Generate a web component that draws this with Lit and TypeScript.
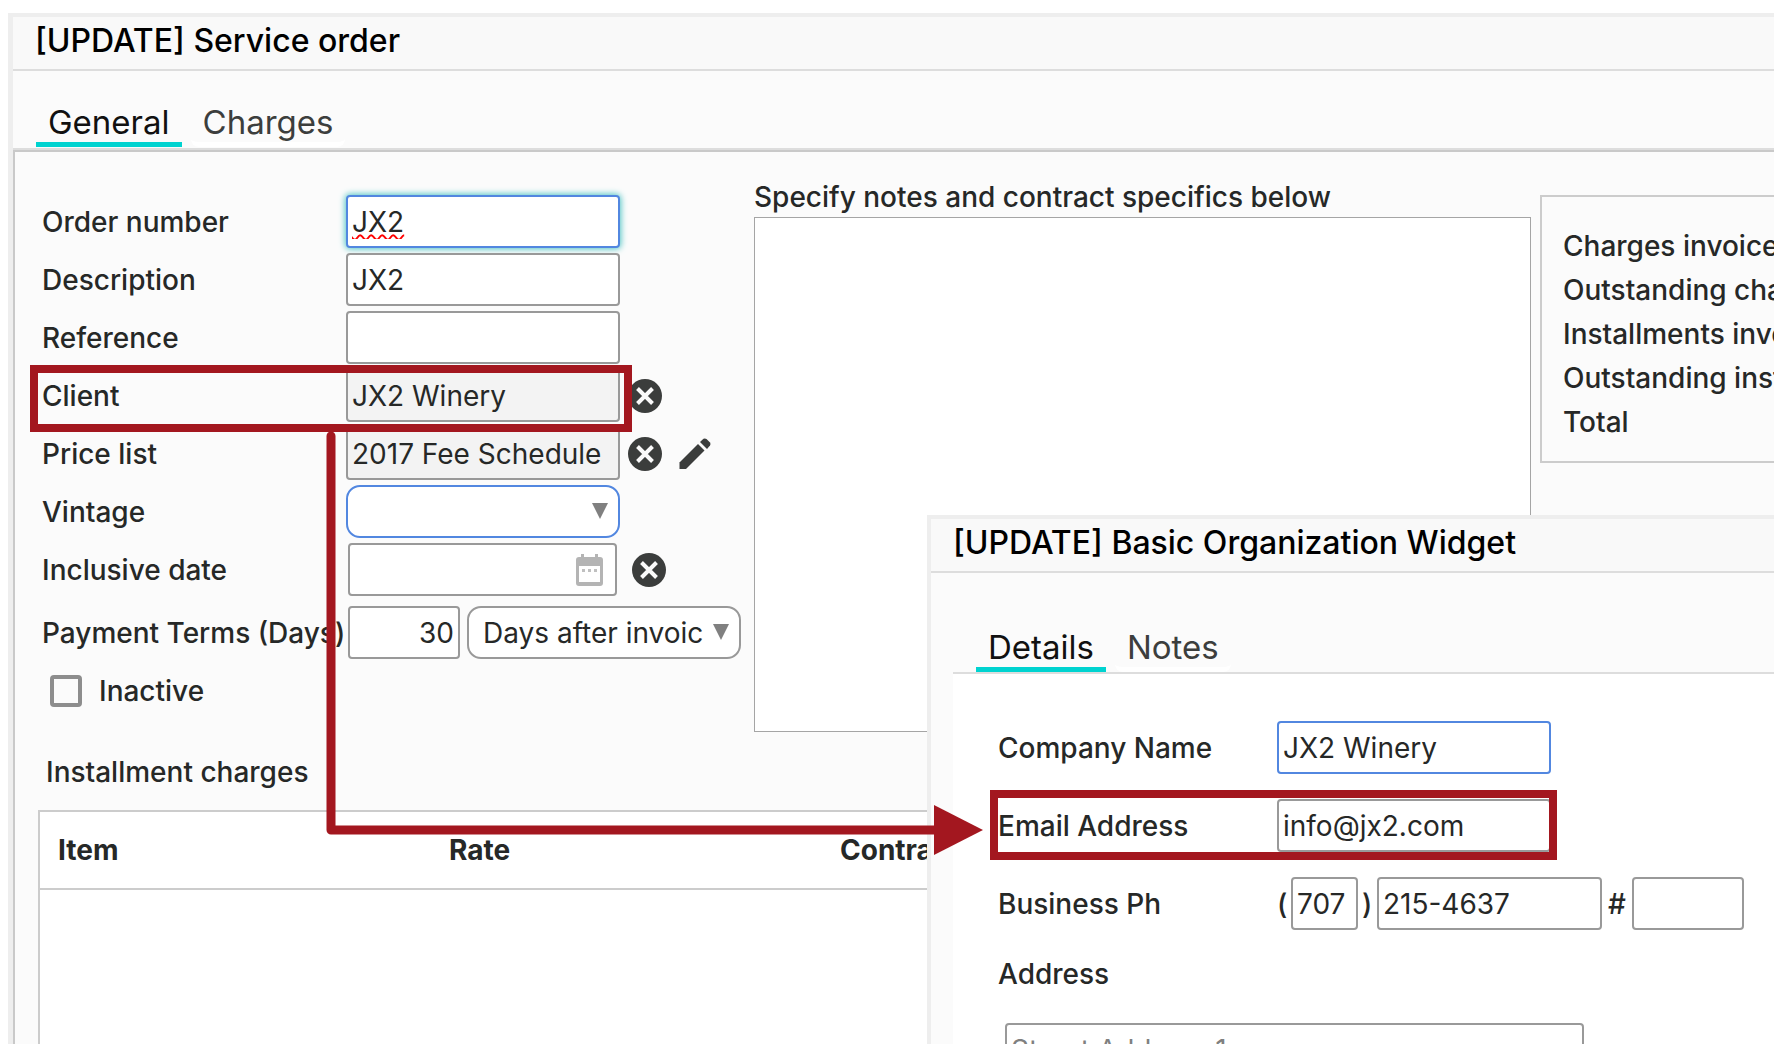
import { LitElement, html, css, svg } from "lit";
import { customElement } from "lit/decorators.js";

const clearIcon = html`<svg width="36" height="36" viewBox="0 0 36 36" aria-hidden="true">
  <circle cx="18" cy="18" r="17" fill="#3b3d3c" />
  <path d="M10.5 10.5l15 15M25.5 10.5l-15 15" stroke="#fafafa" stroke-width="4" />
</svg>`;

const pencilIcon = html`<svg width="32" height="32" viewBox="0 0 32 32" aria-hidden="true">
  <path d="M0.500 31V24.500L19 6L25.500 12.500L7 31Z" fill="#3b3d3c" />
  <path d="M21 4L24.500 0.800Q26 0 27.500 1L31 4.500Q32 6 31 7.500L28 11Z" fill="#3b3d3c" />
</svg>`;

const calendarIcon = html`<svg class="calendar" width="28" height="32" viewBox="0 0 28 32" aria-hidden="true">
  <path d="M5 0h3v5H5zM19 0h3v5h-3z" fill="#b4b4b4" />
  <path fill-rule="evenodd" d="M3 3h21q3 0 3 3v23q0 3-3 3H3q-3 0-3-3V6q0-3 3-3zM3 12v16h21V12z" fill="#b4b4b4" />
  <path d="M6 15h3v3H6zM12 15h3v3h-3zM18 15h3v3h-3z" fill="#c0c0c0" />
</svg>`;

const arrow = svg`
  <path d="M331 436V830H940" fill="none" stroke="#a3171f" stroke-width="9" stroke-linecap="round" stroke-linejoin="round" />
  <path d="M934 805L983 830L934 855Z" fill="#a3171f" />
`;

@customElement("app-root")
export class AppRoot extends LitElement {
  static styles = css`
    :host {
      display: block;
      position: relative;
      height: 100vh;
      overflow: hidden;
      background: #fff;
      color: #262827;
      font-family: Inter, "Open Sans", sans-serif;
      font-size: 28px;
      font-weight: 500;
      line-height: 32px;
    }
    * {
      box-sizing: border-box;
    }
    .window {
      display: flex;
      flex-direction: column;
      background: #fbfbfb;
      border-top: 4px solid #eee;
    }
    .order {
      height: 100%;
      border-left: 5px solid #eee;
    }
    .desk {
      height: 100%;
      padding: 13px 0 0 8px;
    }
    .org {
      position: absolute;
      left: 927px;
      right: 0;
      top: 515px;
      bottom: 0;
      border-left: 4px solid #eee;
    }
    .title {
      margin: 0;
      padding: 7px 22px;
      height: 54px;
      border-bottom: 2px solid #ddd;
      background: #f9f9f9;
      color: #000;
      font-size: 32px;
      font-weight: 500;
      line-height: 34px;
    }
    .tabs {
      display: flex;
      gap: 9px;
      border-bottom: 2px solid #ddd;
    }
    .order .tabs {
      padding: 32px 23px 1px;
    }
    .org .tabs {
      margin-left: 22px;
      padding: 55px 23px 0;
    }
    .tab {
      padding: 0 12px 1px;
      border: 0;
      border-bottom: 5px solid #fff;
      border-radius: 0 0 8px 8px;
      background: none;
      color: #3c3e3d;
      font: inherit;
      font-size: 33px;
      font-weight: 400;
      line-height: 38px;
    }
    .tab.active {
      border-color: #00d3d0;
      border-radius: 0;
      color: #111;
    }
    .panel {
      flex: 1;
      min-height: 0;
      display: flex;
      flex-direction: column;
      padding: 29px 0 0 23px;
      border: solid #c9c9c9;
      border-width: 2px 0 0 2px;
    }
    .top {
      display: grid;
      grid-template-columns: 716px minmax(0, 1fr) 234px;
    }
    .form {
      display: flex;
      flex-direction: column;
      gap: 5px;
      padding: 14px 0 0 4px;
    }
    .row {
      display: flex;
      align-items: center;
      height: 53px;
      white-space: nowrap;
    }
    .row > .name {
      flex: none;
      width: 304px;
    }
    .org .row > .name {
      width: 279px;
    }
    .field {
      width: 274px;
      height: 53px;
      padding: 0 4px;
      border: 2px solid #999;
      border-radius: 4px;
      outline: 0;
      background: #fff;
      color: #262827;
      font: inherit;
      font-weight: 400;
    }
    .field::placeholder {
      color: #808080;
    }
    .field.locked {
      background: #f3f3f3;
    }
    .field.current {
      border-color: #5287e0;
    }
    .field.focused {
      box-shadow: 0 0 6px 1px #4fc4c4;
      text-decoration: underline wavy #f00 2px;
      text-underline-offset: 2px;
    }
    .field.amount {
      width: 112px;
      text-align: right;
    }
    .field.area {
      width: 67px;
    }
    .field.phone {
      width: 225px;
    }
    .field.extension {
      width: 112px;
    }
    .field.street {
      width: 579px;
    }
    .picker {
      position: relative;
      width: 274px;
    }
    .picker .field {
      appearance: none;
      display: block;
      width: 100%;
      padding: 0 36px 0 14px;
      border-radius: 14px;
    }
    .picker::after {
      content: "";
      position: absolute;
      right: 12px;
      top: 18px;
      border: solid transparent;
      border-width: 16px 8px 0;
      border-top-color: #808080;
      pointer-events: none;
    }
    .date {
      display: flex;
      align-items: center;
      justify-content: flex-end;
      width: 269px;
      margin: 0 7px 0 2px;
    }
    .date .field {
      width: 100%;
    }
    .calendar {
      position: absolute;
      margin-right: 13px;
      pointer-events: none;
    }
    .terms {
      margin-top: 5px;
    }
    .terms .amount {
      margin: 0 7px 0 2px;
    }
    .icon {
      display: flex;
      flex: none;
      margin-left: 7px;
      padding: 0;
      border: 0;
      background: none;
    }
    .icon + .icon {
      margin-left: 16px;
    }
    .inactive {
      gap: 17px;
      padding-left: 8px;
    }
    .tick {
      appearance: none;
      width: 32px;
      height: 32px;
      margin: 0;
      border: 4px solid #8d8d8d;
      border-radius: 4px;
      background: #fbfbfb;
    }
    .notes {
      display: flex;
      flex-direction: column;
      gap: 4px;
      padding-right: 9px;
      white-space: nowrap;
    }
    .notes-text {
      display: block;
      width: 100%;
      height: 515px;
      border: 1px solid #a5a5a5;
      outline: 0;
      background: #fff;
      font: inherit;
      resize: none;
    }
    .summary {
      align-self: start;
      margin: 14px 0 0;
      padding: 27px 0 17px 21px;
      overflow: hidden;
      border: 2px solid #ccc;
      border-right: 0;
      list-style: none;
      line-height: 44px;
      white-space: nowrap;
    }
    .subtitle {
      margin: 0;
      padding: 24px 8px 22px;
      font: inherit;
    }
    .grid {
      flex: 1;
      border: solid #ccc;
      border-width: 2px 0 0 2px;
      background: #fff;
    }
    .charges {
      width: 100%;
      border-collapse: collapse;
      table-layout: fixed;
    }
    .charges th {
      width: 391px;
      height: 77px;
      padding: 0 18px;
      border-bottom: 2px solid #ccc;
      font-weight: 700;
      text-align: left;
    }
    .charges th:last-child {
      width: auto;
    }
    .details {
      flex: 1;
      display: flex;
      flex-direction: column;
      gap: 25px;
      min-height: 0;
      margin-left: 22px;
      padding: 47px 0 0 45px;
      background: #fff;
    }
    .details .row {
      flex: none;
    }
    .paren {
      width: 14px;
    }
    .paren.close {
      width: 19px;
      padding-left: 4px;
    }
    .hash {
      width: 30px;
      text-align: center;
    }
    .address {
      display: flex;
      flex-direction: column;
      align-items: flex-start;
      gap: 33px;
      padding-top: 3px;
    }
    .address .field {
      flex: none;
      margin-left: 7px;
    }
    .mark {
      position: absolute;
      border: 8px solid #a3171f;
      pointer-events: none;
    }
    .mark.client {
      left: 30px;
      top: 365px;
      width: 602px;
      height: 67px;
    }
    .mark.email {
      left: 990px;
      top: 790px;
      width: 567px;
      height: 70px;
    }
    .arrow {
      position: absolute;
      left: 0;
      top: 0;
      width: 100%;
      height: 100%;
      pointer-events: none;
    }
  `;

  private clear(label: string) {
    return html`<button class="icon" type="button" aria-label=${label}>${clearIcon}</button>`;
  }

  render() {
    return html`
      <div class="desk">
        <section class="window order">
          <h1 class="title">[UPDATE] Service order</h1>
          <nav class="tabs" role="tablist">
            <button class="tab active" role="tab" aria-selected="true">General</button>
            <button class="tab" role="tab" aria-selected="false">Charges</button>
          </nav>
          <div class="panel">
            <div class="top">
              <form class="form">
                <div class="row">
                  <label class="name" for="number">Order number</label>
                  <input class="field current focused" id="number" value="JX2" />
                </div>
                <div class="row">
                  <label class="name" for="description">Description</label>
                  <input class="field" id="description" value="JX2" />
                </div>
                <div class="row">
                  <label class="name" for="reference">Reference</label>
                  <input class="field" id="reference" />
                </div>
                <div class="row">
                  <label class="name" for="client">Client</label>
                  <input class="field locked" id="client" value="JX2 Winery" readonly />
                  ${this.clear("Clear client")}
                </div>
                <div class="row">
                  <label class="name" for="prices">Price list</label>
                  <input class="field locked" id="prices" value="2017 Fee Schedule" readonly />
                  ${this.clear("Clear price list")}
                  <button class="icon" type="button" aria-label="Edit price list">${pencilIcon}</button>
                </div>
                <div class="row">
                  <label class="name" for="vintage">Vintage</label>
                  <span class="picker">
                    <select class="field current" id="vintage"><option></option></select>
                  </span>
                </div>
                <div class="row">
                  <label class="name" for="date">Inclusive date</label>
                  <span class="date"><input class="field" id="date" />${calendarIcon}</span>
                  ${this.clear("Clear inclusive date")}
                </div>
                <div class="row terms">
                  <label class="name" for="days">Payment Terms (Days)</label>
                  <input class="field amount" id="days" value="30" />
                  <span class="picker">
                    <select class="field" aria-label="Payment terms start">
                      <option>Days after invoice</option>
                    </select>
                  </span>
                </div>
                <div class="row inactive">
                  <input class="tick" type="checkbox" id="inactive" />
                  <label for="inactive">Inactive</label>
                </div>
              </form>
              <div class="notes">
                <label for="notes">Specify notes and contract specifics below</label>
                <textarea class="notes-text" id="notes"></textarea>
              </div>
              <ul class="summary">
                <li>Charges invoiced</li>
                <li>Outstanding charges</li>
                <li>Installments invoiced</li>
                <li>Outstanding installments</li>
                <li>Total</li>
              </ul>
            </div>
            <h2 class="subtitle">Installment charges</h2>
            <div class="grid">
              <table class="charges">
                <thead>
                  <tr>
                    <th>Item</th>
                    <th>Rate</th>
                    <th>Contract</th>
                  </tr>
                </thead>
              </table>
            </div>
          </div>
        </section>
      </div>

      <section class="window org">
        <h1 class="title">[UPDATE] Basic Organization Widget</h1>
        <nav class="tabs" role="tablist">
          <button class="tab active" role="tab" aria-selected="true">Details</button>
          <button class="tab" role="tab" aria-selected="false">Notes</button>
        </nav>
        <form class="details">
          <div class="row">
            <label class="name" for="company">Company Name</label>
            <input class="field current" id="company" value="JX2 Winery" />
          </div>
          <div class="row">
            <label class="name" for="email">Email Address</label>
            <input class="field" id="email" value="info@jx2.com" />
          </div>
          <div class="row">
            <label class="name" for="phone">Business Ph</label>
            <span class="paren">(</span>
            <input class="field area" aria-label="Area code" value="707" />
            <span class="paren close">)</span>
            <input class="field phone" id="phone" value="215-4637" />
            <span class="hash">#</span>
            <input class="field extension" aria-label="Extension" />
          </div>
          <div class="address">
            <label for="street">Address</label>
            <input class="field street" id="street" placeholder="Street Address 1" />
          </div>
        </form>
      </section>

      <div class="mark client"></div>
      <div class="mark email"></div>
      <svg class="arrow" aria-hidden="true">${arrow}</svg>
    `;
  }
}
